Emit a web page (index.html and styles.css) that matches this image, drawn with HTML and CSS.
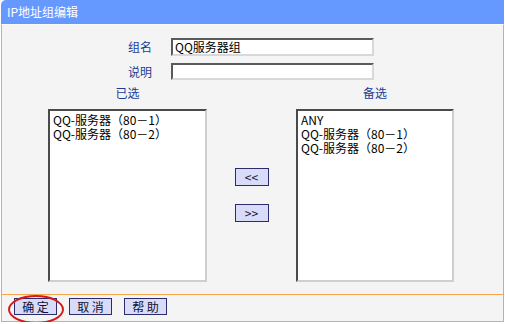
FILE: index.html
```html
<!DOCTYPE html>
<html lang="zh-CN">
<head>
    <meta charset="UTF-8">
    <title>IP地址组编辑</title>
    <link rel="stylesheet" href="styles.css">
</head>
<body>
    <div class="window">
        <div class="titlebar">IP地址组编辑</div>

        <div class="panel">
            <div class="field">
                <label class="label">组名</label>
                <div class="textbox">QQ服务器组</div>
            </div>
            <div class="field last">
                <label class="label">说明</label>
                <div class="textbox short"></div>
            </div>

            <div class="lists">
                <div class="list-title">已选</div>
                <div></div>
                <div class="list-title">备选</div>

                <div class="listbox">
                    <div class="item">QQ-服务器（80－1）</div>
                    <div class="item">QQ-服务器（80－2）</div>
                </div>
                <div class="movers">
                    <button class="btn move">&lt;&lt;</button>
                    <button class="btn move">&gt;&gt;</button>
                </div>
                <div class="listbox">
                    <div class="item">ANY</div>
                    <div class="item">QQ-服务器（80－1）</div>
                    <div class="item">QQ-服务器（80－2）</div>
                </div>
            </div>
        </div>

        <div class="footer">
            <button class="btn action">确 定</button>
            <button class="btn action">取 消</button>
            <button class="btn action">帮 助</button>
            <span class="mark"></span>
        </div>
    </div>
</body>
</html>
```

FILE: styles.css
```css
body {
    margin: 0;
    background-color: #ffffff;
    font-family: "Noto Sans CJK SC", "DejaVu Sans", sans-serif;
    font-size: 12px;
}

.window {
    width: 503px;
    margin-left: 1px;
}

.titlebar {
    height: 24px;
    line-height: 24px;
    padding-left: 6px;
    background-color: #6699ff;
    color: white;
    border-radius: 5px 0 0 0;
}

.panel {
    background-color: #f4f4f4;
    border-left: 1px solid #f5a54a;
    border-right: 1px solid #f5a54a;
    border-top: 1px solid #fbfaf4;
    padding: 13px 0 12px 0;
}

.field {
    display: flex;
    align-items: center;
    padding-left: 98px;
    margin-bottom: 7px;
}

.field.last {
    margin-bottom: 6px;
}

.label {
    width: 52px;
    margin-right: 19px;
    text-align: right;
    line-height: 14px;
    color: #1c3c94;
}

.textbox {
    box-sizing: border-box;
    width: 203px;
    height: 18px;
    line-height: 14px;
    padding-left: 2px;
    background-color: white;
    border: 2px solid;
    border-color: #5a5a5a #d8d8d8 #d8d8d8 #5a5a5a;
}

.textbox.short {
    height: 17px;
}

.lists {
    display: grid;
    grid-template-columns: 159px 89px 158px;
    grid-template-rows: 14px 173px;
    row-gap: 9px;
    padding-left: 46px;
}

.list-title {
    text-align: center;
    line-height: 14px;
    color: #1c3c94;
}

.listbox {
    box-sizing: border-box;
    background-color: white;
    border: 2px solid;
    border-color: #4a4a4a #cfcfcf #cfcfcf #4a4a4a;
    padding: 2px 0 0 3px;
    color: #000;
}

.item {
    height: 14px;
    line-height: 14px;
    white-space: nowrap;
}

.movers {
    display: flex;
    flex-direction: column;
    align-items: center;
    gap: 18px;
    padding-top: 59px;
}

.btn {
    box-sizing: border-box;
    padding: 0;
    font-family: inherit;
    font-size: 12px;
    color: #111133;
    background-color: #d9dcf8;
    border: 1px solid #2c2c6c;
    cursor: pointer;
}

.move {
    width: 34px;
    height: 18px;
    line-height: 14px;
}

.footer {
    position: relative;
    box-sizing: border-box;
    height: 28px;
    background-color: #f4f4f4;
    border: 1px solid #f5a54a;
    display: flex;
    align-items: flex-start;
    gap: 12px;
    padding: 3px 0 0 12px;
}

.action {
    width: 43px;
    height: 17px;
    line-height: 14px;
}

.mark {
    position: absolute;
    left: 6px;
    top: 0;
    width: 56px;
    height: 29px;
    box-sizing: border-box;
    border: 2px solid #d21c1c;
    border-radius: 50%;
}
```
